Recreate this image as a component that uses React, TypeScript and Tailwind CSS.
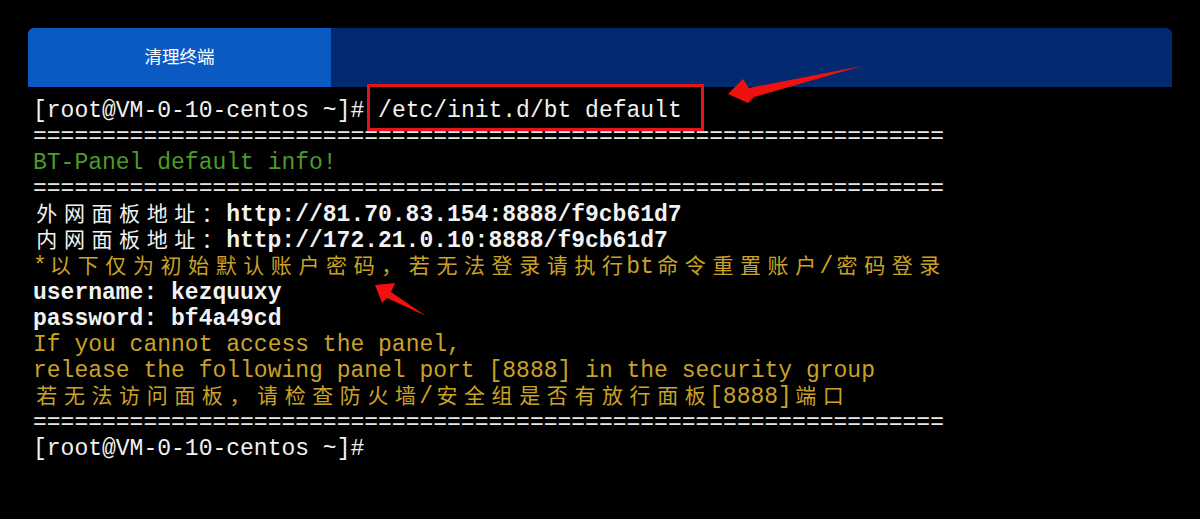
import React from "react";

const MONO = "font-['Liberation_Mono','DejaVu_Sans_Mono',monospace]";
const CJK = "font-['Noto_Sans_CJK_SC','Noto_Sans',sans-serif]";

const WIDE = /[\u2E80-\u9FFF\u3000-\u303F\uFF00-\uFFEF]/;

// splits a line into narrow runs and double-width cells, like a terminal grid
function Term({ text }: { text: string }) {
  const parts: Array<{ wide: boolean; s: string }> = [];
  for (const ch of text) {
    const wide = WIDE.test(ch);
    const last = parts[parts.length - 1];
    if (!wide && last && !last.wide) last.s += ch;
    else parts.push({ wide, s: ch });
  }
  return (
    <>
      {parts.map((p, i) =>
        p.wide ? (
          <span
            key={i}
            className={`inline-block w-[27.6px] text-center text-[21px] leading-none font-normal ${CJK}`}
          >
            {p.s}
          </span>
        ) : (
          <span key={i}>{p.s}</span>
        )
      )}
    </>
  );
}

const RULE = "=".repeat(66);

const LINES: Array<{ text: string; cls: string }> = [
  { text: RULE, cls: "text-[#e6e6e6]" },
  { text: "BT-Panel default info!", cls: "text-[#4e9a2a]" },
  { text: RULE, cls: "text-[#e6e6e6]" },
  { text: "外网面板地址：http://81.70.83.154:8888/f9cb61d7", cls: "text-[#f2f2f2] font-bold" },
  { text: "内网面板地址：http://172.21.0.10:8888/f9cb61d7", cls: "text-[#f2f2f2] font-bold" },
  { text: "*以下仅为初始默认账户密码，若无法登录请执行bt命令重置账户/密码登录", cls: "text-[#c9a227]" },
  { text: "username: kezquuxy", cls: "text-[#f2f2f2] font-bold" },
  { text: "password: bf4a49cd", cls: "text-[#f2f2f2] font-bold" },
  { text: "If you cannot access the panel,", cls: "text-[#c9a227]" },
  { text: "release the following panel port [8888] in the security group", cls: "text-[#c9a227]" },
  { text: "若无法访问面板，请检查防火墙/安全组是否有放行面板[8888]端口", cls: "text-[#c9a227]" },
  { text: RULE, cls: "text-[#e6e6e6]" },
  { text: "[root@VM-0-10-centos ~]#", cls: "text-[#f2f2f2]" },
];

export default function App() {
  return (
    <div className="relative min-h-screen bg-black px-[28px] pt-[28px]">
      <div className="flex h-[59px] overflow-hidden rounded-t-md bg-[#032a70]">
        <div className={`flex w-[303px] items-center justify-center pb-[3px] bg-[#0b5ac4] text-[17.5px] text-white ${CJK}`}>
          清理终端
        </div>
      </div>

      <div className={`pl-[5px] pt-[11px] text-[23px] leading-[26px] whitespace-pre ${MONO}`}>
        <div className="h-[26px] text-[#f2f2f2]">
          [root@VM-0-10-centos ~]#{" "}
          <span className="relative">
            /etc/init.d/bt default
            <span className="absolute -top-[14px] -bottom-[7px] -left-[11px] -right-[22px] border-[3px] border-[#e3141b]" />
          </span>
        </div>
        {LINES.map((l, i) => (
          <div key={i} className={`h-[26px] ${l.cls}`}>
            <Term text={l.text} />
          </div>
        ))}
      </div>

      {/* annotation arrows */}
      <svg className="pointer-events-none absolute left-0 top-0" width="1200" height="519" viewBox="0 0 1200 519">
        <polygon points="728,94 743,79 749,88 862,66 754,97 748,103" fill="#f01010" />
        <polygon points="375,285 395,283 391,292 426,316 387,298 382,303" fill="#f01010" />
      </svg>
    </div>
  );
}
